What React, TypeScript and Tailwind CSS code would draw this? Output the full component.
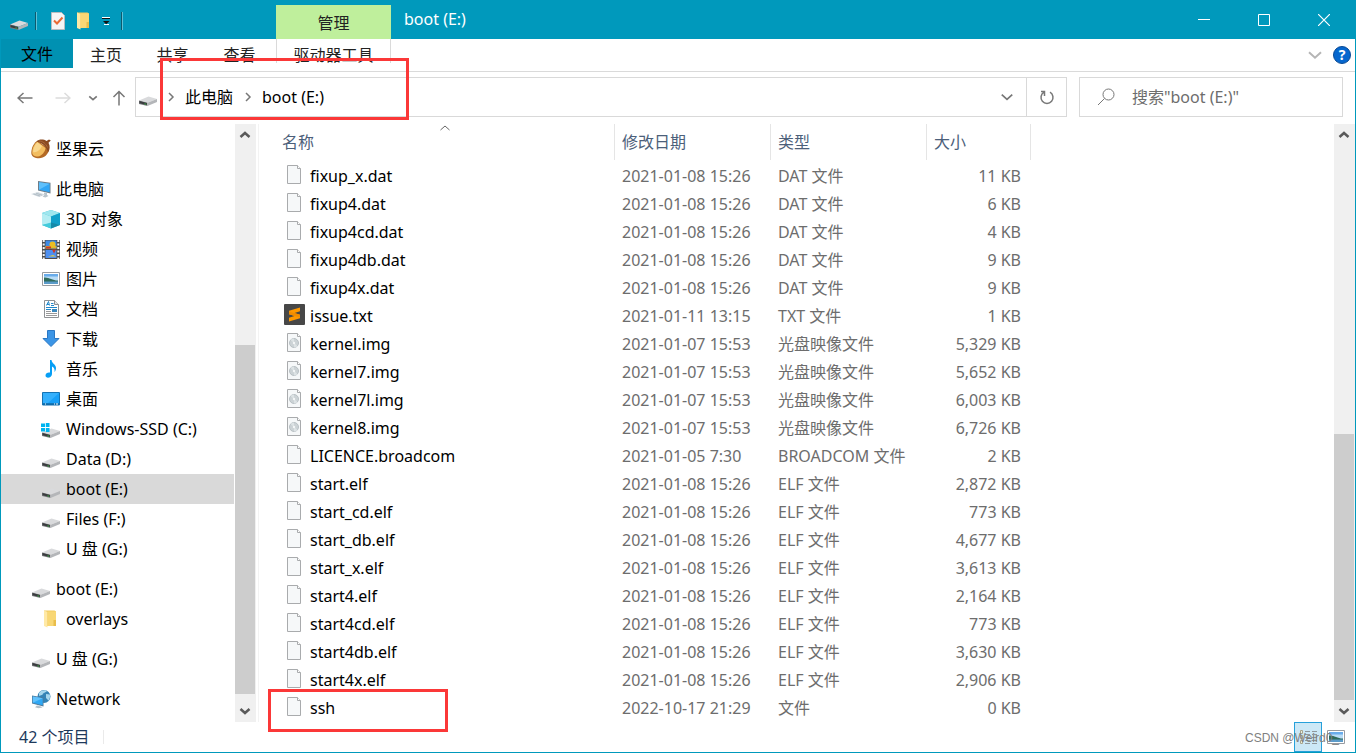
import type { ReactNode } from "react";

type FileKind = "blank" | "disc" | "sublime";

type FileRow = {
  name: string;
  date: string;
  type: string;
  size: string;
  kind?: FileKind;
};

const files: FileRow[] = [
  { name: "fixup_x.dat", date: "2021-01-08 15:26", type: "DAT 文件", size: "11 KB" },
  { name: "fixup4.dat", date: "2021-01-08 15:26", type: "DAT 文件", size: "6 KB" },
  { name: "fixup4cd.dat", date: "2021-01-08 15:26", type: "DAT 文件", size: "4 KB" },
  { name: "fixup4db.dat", date: "2021-01-08 15:26", type: "DAT 文件", size: "9 KB" },
  { name: "fixup4x.dat", date: "2021-01-08 15:26", type: "DAT 文件", size: "9 KB" },
  { name: "issue.txt", date: "2021-01-11 13:15", type: "TXT 文件", size: "1 KB", kind: "sublime" },
  { name: "kernel.img", date: "2021-01-07 15:53", type: "光盘映像文件", size: "5,329 KB", kind: "disc" },
  { name: "kernel7.img", date: "2021-01-07 15:53", type: "光盘映像文件", size: "5,652 KB", kind: "disc" },
  { name: "kernel7l.img", date: "2021-01-07 15:53", type: "光盘映像文件", size: "6,003 KB", kind: "disc" },
  { name: "kernel8.img", date: "2021-01-07 15:53", type: "光盘映像文件", size: "6,726 KB", kind: "disc" },
  { name: "LICENCE.broadcom", date: "2021-01-05 7:30", type: "BROADCOM 文件", size: "2 KB" },
  { name: "start.elf", date: "2021-01-08 15:26", type: "ELF 文件", size: "2,872 KB" },
  { name: "start_cd.elf", date: "2021-01-08 15:26", type: "ELF 文件", size: "773 KB" },
  { name: "start_db.elf", date: "2021-01-08 15:26", type: "ELF 文件", size: "4,677 KB" },
  { name: "start_x.elf", date: "2021-01-08 15:26", type: "ELF 文件", size: "3,613 KB" },
  { name: "start4.elf", date: "2021-01-08 15:26", type: "ELF 文件", size: "2,164 KB" },
  { name: "start4cd.elf", date: "2021-01-08 15:26", type: "ELF 文件", size: "773 KB" },
  { name: "start4db.elf", date: "2021-01-08 15:26", type: "ELF 文件", size: "3,630 KB" },
  { name: "start4x.elf", date: "2021-01-08 15:26", type: "ELF 文件", size: "2,906 KB" },
  { name: "ssh", date: "2022-10-17 21:29", type: "文件", size: "0 KB" },
];

function Icon({ children }: { children: ReactNode }) {
  return (
    <svg className="h-5 w-5 shrink-0" viewBox="0 0 20 20" fill="none" aria-hidden="true">
      {children}
    </svg>
  );
}

function DriveShape() {
  return (
    <>
      <path d="M1 13.500 10.500 9.600 19 12 9.500 15.700Z" fill="#d9dadc" />
      <path d="M1 13.500 9.500 15.700V19L1 17Z" fill="#77797c" />
      <path d="M9.500 15.700 19 12V15L9.500 19Z" fill="#b4b6b9" />
      <path d="M1.500 14.100 9 16V18L1.500 16.300Z" fill="#3a3c3f" />
      <path d="M6.500 16.300 8.200 16.700V17.700L6.500 17.300Z" fill="#35a93f" />
    </>
  );
}

function DriveIcon() {
  return (
    <Icon>
      <DriveShape />
    </Icon>
  );
}

function SystemDriveIcon() {
  return (
    <Icon>
      <DriveShape />
      <path d="M0 4.500h4v3.500H0zM4.800 4h3.700v4H4.800zM0 9h4v3.500H0zM4.800 9h3.700v4H4.800z" fill="#00b4f0" />
    </Icon>
  );
}

function AcornIcon() {
  return (
    <Icon>
      <path d="M6.500 1.800C3.200 3.500.3 8.500.3 14c0 3.500 3.500 5.300 7.700 5.300 5 0 9.500-4 10-9.300z" fill="#b46a25" />
      <path d="M6.500 2.800C3.500 4.500 1.200 9 1.200 13.500c0 2.800 2.800 4.200 5.800 4C10.500 17 14.500 12.500 14.500 9z" fill="#f2bd60" />
      <path d="M6.500 3.500C4 5.500 2 9.500 2.200 13c2.500 1 7-1.500 8.800-6z" fill="#f9d78d" />
      <path d="M5.500 2.500C8 0 12.500 0 15.500 2L18 .4l1.800 1.200-2.300 2.200c1.800 3.200 1.500 7-.5 9.700-.8-5-5-9.500-11.500-11z" fill="#8a4a20" />
      <path d="M8 2c3.500 0 7 2.500 8.500 6.500" stroke="#a9693a" />
    </Icon>
  );
}

function ComputerIcon() {
  return (
    <Icon>
      <path d="M7 2 19.500 3.800V14.500L7 11.500Z" fill="#6d7c88" />
      <path d="M8 3.200 18.700 4.800V13.200L8 10.700Z" fill="#31a6f5" />
      <path d="M8 3.200 18.700 4.800 8 10.700Z" fill="#5fc0fb" />
      <path d="M13 13.500l3 .6v1.800l1.500 1-3 1.600-3-.8 1.500-1Z" fill="#b9c4cc" />
      <path d="M0 15 7 13 14.500 15.800 8 18Z" fill="#d4dce2" />
      <path d="M2.500 15 9 17M5 14.200l6 2" stroke="#b4bfc7" />
    </Icon>
  );
}

function CubeIcon() {
  return (
    <Icon>
      <path d="M1 4 10 1l9 3v12l-9 3.500L1 16z" fill="#31bfd2" />
      <path d="M1 4 10 1l9 3-9 3.500Z" fill="#9fe6ee" />
      <path d="M1 4l9 3.500v7L1 16z" fill="#b4edf3" />
      <path d="M10 7.500 19 4v12l-9-1.500z" fill="#109fc9" />
      <path d="M1 16l9-2.500v6z" fill="#44cbdb" />
      <path d="M10 13.500 19 16l-9 3.500z" fill="#1489a8" />
    </Icon>
  );
}

function VideoIcon() {
  return (
    <Icon>
      <path d="M1 1h18v19H1z" fill="#4c4c4c" />
      <path d="M4.500 1.500h11v8h-11z" fill="#3f8be4" />
      <path d="M4.500 11h11v8h-11z" fill="#4d8ff0" />
      <path d="M4.500 7h11v2.500h-11z" fill="#dfb42b" />
      <circle cx="11.500" cy="5.500" r="3" fill="#ebbd22" />
      <path d="M5 7.500h5v2H5zM11 10.500h4l-2 4z" fill="#cc3827" />
      <path d="M7 17.500h8l-3-1.500z" fill="#e4cb41" />
      <path d="M2.700 1v19M17.300 1v19" stroke="#f4f4f4" strokeWidth="2" strokeDasharray="2 1.500" />
    </Icon>
  );
}

function PictureIcon() {
  return (
    <Icon>
      <path d="M1.500 3.500h17v13h-17z" fill="#fff" stroke="#989ba0" />
      <path d="M3 5h14v10H3z" fill="#b9dcf6" />
      <path d="M3 5h14v2.500H3z" fill="#69aceb" />
      <path d="M3 8.500c5-.5 8 3 14 3V13H3z" fill="#2f6b5b" />
      <path d="M3 12.500h14V15H3z" fill="#5b9bc9" />
    </Icon>
  );
}

function DocumentIcon() {
  return (
    <Icon>
      <path d="M3.500 1.500h10l4 4v13h-14z" fill="#fff" stroke="#8e9194" />
      <path d="M13.500 1.500v4h4" fill="#e4e6e8" stroke="#8e9194" />
      <path d="m5.500 6.500 2-4 1 4M5.800 5.500H8M10 4.500h2.500M10 6.500h3M5 8.500h11M5 10.500h5" stroke="#2188cb" />
      <path d="M11 10h5v3h-5z" fill="#3887bd" />
      <path d="M5 12.500h5M5 14.500h11M5 16.500h11" stroke="#999" />
    </Icon>
  );
}

function DownloadIcon() {
  return (
    <Icon>
      <path d="M6.500 1.500h7v8h4.500L10 17.500 2 9.500h4.500z" fill="#3b95e6" stroke="#2a77c4" />
    </Icon>
  );
}

function MusicIcon() {
  return (
    <Icon>
      <path d="M9 1h1.500c.4 3.500 4.500 4.500 4.500 8 0 1.800-.6 3-1.500 4 .6-3-.7-4.800-2.500-5.500v7.500c0 4-6.500 5-6.500 1.500 0-2.500 2.500-3.500 4.500-3Z" fill="#079ff5" />
    </Icon>
  );
}

function DesktopIcon() {
  return (
    <Icon>
      <path d="M1.500 3.500h17v12.500h-17z" fill="#18a0f8" stroke="#1473b4" />
      <path d="M2 4h16L7 14H2z" fill="#35b0fc" />
      <path d="M2 15h16" stroke="#0a4e7c" />
      <path d="M4 15h1M13 15h1M15 15h2" stroke="#fff" />
    </Icon>
  );
}

function FolderIcon() {
  return (
    <Icon>
      <path d="M3 1.500h10.500l1.500 1V17H3z" fill="#f1cb60" />
      <path d="M3 1.500 6.500 3v15.500L3 17z" fill="#ffe9a6" />
      <path d="M6.500 2.500H15V17H6.500z" fill="#f8d775" />
      <path d="M12.500 11H15v6h-2.500z" fill="#e9bd4a" />
    </Icon>
  );
}

function NetworkIcon() {
  return (
    <Icon>
      <circle cx="13" cy="7.500" r="6.500" fill="#3483b5" />
      <path d="M8 4c2-3 6-3 8-2.200-1 2.200-4 1.500-4.500 4L8 7zM15 5l4 .5c.4 2-.2 4.500-1.500 6L15 9z" fill="#a7d7ed" />
      <path d="M1 6.500 12.500 8.500v9L1 14.500z" fill="#4f7b9c" />
      <path d="M1.800 7.500 11.700 9.300v7L1.800 13.800z" fill="#2fa8f5" />
      <path d="M1.800 7.500 11.700 9.300 1.800 13.800z" fill="#62c2fc" />
      <path d="m6 16.500 4 1 1.500 1-4 .8-3.500-1z" fill="#b4c0c8" />
    </Icon>
  );
}

function ChecklistIcon() {
  return (
    <Icon>
      <path d="M3.500 1.500h10l3 3v14h-13z" fill="#f5f5f5" stroke="#b8bcc0" />
      <path d="m6 9.500 3 3 5.500-6" stroke="#ea6a34" strokeWidth="2" />
    </Icon>
  );
}

function FileIcon({ kind = "blank" }: { kind?: FileKind }) {
  if (kind === "sublime") {
    return (
      <svg className="h-[21px] w-[21px]" viewBox="0 0 21 21" aria-hidden="true">
        <rect width="21" height="21" rx="1" fill="#474747" />
        <path d="M16 3.500v3.700l-5.500 1.700L16 10.800v3.500L5 17.500v-3.700l5.500-1.700L5 10.200V6.700Z" fill="#ff9800" />
        <path d="M5 7.500 16 10.800v2.700L5 10.200Z" fill="#f28c00" />
      </svg>
    );
  }
  return (
    <svg className="h-[21px] w-[21px]" viewBox="0 0 21 21" fill="none" aria-hidden="true">
      <path d="M3.500 1.500h10l3 3v15h-13z" fill="#f6f8f9" stroke="#a9abad" />
      <path d="M13.500 1.500v3h3" fill="#fff" stroke="#a9abad" />
      {kind === "disc" && (
        <>
          <circle cx="10" cy="11" r="4.500" fill="#ccd3d6" stroke="#b9c1c5" />
          <path d="m10 11-3.500-3A4.500 4.500 0 0 1 10 6.500zM10 11l3.500 3a4.500 4.500 0 0 1-3.500 1.500z" fill="#dde3e5" />
          <circle cx="10" cy="11" r="1.200" fill="#f4f6f7" />
        </>
      )}
    </svg>
  );
}

type Direction = "up" | "down" | "right";

const chevrons: Record<Direction, string> = {
  up: "m1.500 8 4.500-4 4.500 4",
  down: "m1.500 4 4.500 4 4.500-4",
  right: "m4 2 4 4-4 4",
};

function Chevron({ to, className }: { to: Direction; className: string }) {
  return (
    <svg className={className} viewBox="0 0 12 12" fill="none" stroke="currentColor" aria-hidden="true">
      <path d={chevrons[to]} />
    </svg>
  );
}

function ScrollBar({ thumb, className }: { thumb: ReactNode; className: string }) {
  return (
    <div className={`flex shrink-0 flex-col bg-[#f0f0f0] text-[#5a5a5a] ${className}`}>
      <button type="button" aria-label="向上滚动" className="flex h-[22px] items-center justify-center pr-px">
        <Chevron to="up" className="h-3 w-3 stroke-[2.500]" />
      </button>
      <div className="flex min-h-0 flex-1 flex-col justify-end">{thumb}</div>
      <button type="button" aria-label="向下滚动" className="flex h-[22px] items-center justify-center pr-px">
        <Chevron to="down" className="h-3 w-3 stroke-[2.500]" />
      </button>
    </div>
  );
}

type Place = { label: string; icon: ReactNode; active?: boolean };

const places: Place[][] = [
  [{ label: "坚果云", icon: <AcornIcon /> }],
  [
    { label: "此电脑", icon: <ComputerIcon /> },
    { label: "3D 对象", icon: <CubeIcon /> },
    { label: "视频", icon: <VideoIcon /> },
    { label: "图片", icon: <PictureIcon /> },
    { label: "文档", icon: <DocumentIcon /> },
    { label: "下载", icon: <DownloadIcon /> },
    { label: "音乐", icon: <MusicIcon /> },
    { label: "桌面", icon: <DesktopIcon /> },
    { label: "Windows-SSD (C:)", icon: <SystemDriveIcon /> },
    { label: "Data (D:)", icon: <DriveIcon /> },
    { label: "boot (E:)", icon: <DriveIcon />, active: true },
    { label: "Files (F:)", icon: <DriveIcon /> },
    { label: "U 盘 (G:)", icon: <DriveIcon /> },
  ],
  [
    { label: "boot (E:)", icon: <DriveIcon /> },
    { label: "overlays", icon: <FolderIcon /> },
  ],
  [{ label: "U 盘 (G:)", icon: <DriveIcon /> }],
  [{ label: "Network", icon: <NetworkIcon /> }],
];

function TitleBar() {
  return (
    <header className="flex h-[39px] shrink-0 items-stretch bg-[#0099bc] pr-px">
      <div className="flex w-[275px] items-center pt-0.5 pl-2">
        <DriveIcon />
        <span className="mr-[11px] ml-1.5 h-[18px] w-0.5 border-r border-[#5fc0d5] bg-[#0b5a6e]" />
        <button type="button" aria-label="属性">
          <ChecklistIcon />
        </button>
        <button type="button" aria-label="新建文件夹" className="ml-1.5">
          <FolderIcon />
        </button>
        <button type="button" aria-label="自定义快速访问工具栏" className="ml-1.5">
          <svg className="h-3 w-3" viewBox="0 0 12 12" aria-hidden="true">
            <path d="M2 2.500h8M4 9.500h5" stroke="#fff" />
            <path d="M2 3.500h8" stroke="#111" />
            <path d="M3 6h6.500L6.200 9.200z" fill="#111" />
          </svg>
        </button>
        <span className="ml-[9px] h-[18px] w-0.5 border-r border-[#5fc0d5] bg-[#0b5a6e]" />
      </div>
      <div className="mt-[5px] flex w-[115px] items-center justify-center bg-[#bfef9c] pt-0.5 text-[#222]">管理</div>
      <h1 className="ml-[13px] leading-[39px] text-white">boot (E:)</h1>
      <div className="ml-auto flex text-white">
        <button type="button" aria-label="最小化" className="flex w-[60px] items-center justify-center">
          <svg className="h-3 w-3" viewBox="0 0 12 12" stroke="currentColor" aria-hidden="true">
            <path d="M0 5.500h12" />
          </svg>
        </button>
        <button type="button" aria-label="最大化" className="flex w-[60px] items-center justify-center">
          <svg className="h-3 w-3" viewBox="0 0 12 12" fill="none" stroke="currentColor" aria-hidden="true">
            <path d="M.5.5h11v11H.5z" />
          </svg>
        </button>
        <button type="button" aria-label="关闭" className="flex w-[60px] items-center justify-center">
          <svg className="h-3 w-3" viewBox="0 0 12 12" fill="none" stroke="currentColor" strokeWidth="1.200" aria-hidden="true">
            <path d="m0 0 12 12M12 0 0 12" />
          </svg>
        </button>
      </div>
    </header>
  );
}

function Ribbon() {
  return (
    <nav className="flex h-[33px] shrink-0 border-b border-[#dadada]">
      <button type="button" className="h-[29px] w-[72px] bg-[#0091b2]">
        文件
      </button>
      <div className="flex h-6 leading-8 text-[#222]">
        <button type="button" className="flex w-[66px] justify-center">主页</button>
        <button type="button" className="flex w-[67px] justify-center">共享</button>
        <button type="button" className="flex w-[67px] justify-center">查看</button>
        <button type="button" className="ml-[3px] flex w-[115px] justify-center border-x border-[#dadada]">
          驱动器工具
        </button>
      </div>
      <div className="ml-auto flex items-center gap-2.5 pr-1">
        <button type="button" aria-label="展开功能区" className="text-[#b5b5b5]">
          <Chevron to="down" className="h-4 w-4 stroke-[1.5]" />
        </button>
        <button
          type="button"
          aria-label="帮助"
          className="flex h-[18px] w-[18px] items-center justify-center rounded-full border border-[#0a4a94] bg-[#0667ce] text-sm font-bold text-white"
        >
          ?
        </button>
      </div>
    </nav>
  );
}

function AddressBar() {
  return (
    <div className="relative flex h-[52px] shrink-0 pt-[5px] pr-3">
      <div className="flex h-10 w-[134px] items-center pt-0.5 pl-4 text-[#777]">
        <button type="button" aria-label="后退">
          <svg className="h-4 w-4" viewBox="0 0 16 16" fill="none" stroke="currentColor" strokeWidth="1.500" aria-hidden="true">
            <path d="M15.500 8H1M6.500 3 1 8l5.500 5" />
          </svg>
        </button>
        <button type="button" aria-label="前进" className="ml-[22px] text-[#dcdcdc]">
          <svg className="h-4 w-4" viewBox="0 0 16 16" fill="none" stroke="currentColor" strokeWidth="1.500" aria-hidden="true">
            <path d="M.5 8H15M9.500 3 15 8l-5.500 5" />
          </svg>
        </button>
        <button type="button" aria-label="最近浏览的位置" className="ml-[17px]">
          <Chevron to="down" className="h-2.5 w-2.5 stroke-2" />
        </button>
        <button type="button" aria-label="向上" className="ml-[13px]">
          <svg className="h-4 w-4" viewBox="0 0 16 16" fill="none" stroke="currentColor" strokeWidth="1.500" aria-hidden="true">
            <path d="M8 15.500V1.500M2.500 7 8 1.500 13.500 7" />
          </svg>
        </button>
      </div>
      <div className="flex h-10 min-w-0 flex-1 items-center border border-[#d9d9d9] pl-0.5">
        <DriveIcon />
        <Chevron to="right" className="ml-[7px] h-3 w-3 stroke-[1.500] text-[#777]" />
        <a href="#this-pc" className="ml-2">此电脑</a>
        <Chevron to="right" className="ml-[9px] h-3 w-3 stroke-[1.500] text-[#777]" />
        <a href="#boot" className="ml-2">boot (E:)</a>
        <button type="button" aria-label="以前的位置" className="ml-auto flex w-[38px] justify-center text-[#777]">
          <Chevron to="down" className="h-3.5 w-3.5 stroke-[1.500]" />
        </button>
        <button
          type="button"
          aria-label="刷新"
          className="flex h-full w-10 items-center justify-center border-l border-[#d9d9d9] text-[#777]"
        >
          <svg className="h-4 w-4" viewBox="0 0 16 16" fill="none" stroke="currentColor" strokeWidth="1.500" aria-hidden="true">
            <path d="M11 3.200A6 6 0 1 1 5 3.200M5.500 7V2.500H2" />
          </svg>
        </button>
      </div>
      <label className="ml-3 flex h-10 w-[264px] items-center border border-[#d9d9d9] pl-[17px]">
        <svg className="h-[18px] w-[18px] shrink-0 text-[#777]" viewBox="0 0 18 18" fill="none" stroke="currentColor" aria-hidden="true">
          <circle cx="11.500" cy="6.500" r="5.500" />
          <path d="M7.500 10.500 1 17" />
        </svg>
        <input
          type="text"
          aria-label="搜索"
          placeholder={'搜索"boot (E:)"'}
          className="ml-[17px] min-w-0 flex-1 outline-none placeholder:text-[#6d6d6d]"
        />
      </label>
      <div className="pointer-events-none absolute -top-3.5 left-[159px] h-[62px] w-[249px] border-3 border-[#fb3838]" />
    </div>
  );
}

function Sidebar() {
  return (
    <aside className="flex w-[258px] shrink-0 border-r border-[#f3f3f3] pr-0.5">
      <div className="flex min-w-0 flex-1 flex-col gap-2.5 overflow-hidden pt-2.5 pr-px">
        {places.map((group, g) => (
          <ul key={g}>
            {group.map((place, i) => (
              <li key={place.label} className={place.active ? "bg-[#d9d9d9]" : ""}>
                <a
                  href="#place"
                  className={`flex h-[30px] items-center gap-[5px] ${i === 0 ? "pl-[30px]" : "pl-10"}`}
                >
                  {place.icon}
                  {place.label}
                </a>
              </li>
            ))}
          </ul>
        ))}
      </div>
      <ScrollBar className="w-[21px]" thumb={<div className="mr-px mb-1.5 h-[63%] bg-[#cdcdcd]" />} />
    </aside>
  );
}

function FileTable() {
  return (
    <table className="ml-[17px] w-[755px] table-fixed border-collapse self-start text-left text-[#6d6d6d]">
      <colgroup>
        <col className="w-[339px]" />
        <col className="w-[156px]" />
        <col className="w-[156px]" />
        <col className="w-[104px]" />
      </colgroup>
      <thead className="text-[#4c607a]">
        <tr className="h-[38px]">
          <th className="relative p-0 align-top font-normal">
            <div className="h-9 border-r border-[#e5e5e5] pl-1.5 leading-9">名称</div>
            <Chevron to="up" className="absolute -top-0.5 left-[163px] h-3 w-3 text-[#666]" />
          </th>
          {["修改日期", "类型", "大小"].map((title) => (
            <th key={title} className="p-0 align-top font-normal">
              <div className="h-9 border-r border-[#e5e5e5] pl-[7px] leading-9">{title}</div>
            </th>
          ))}
        </tr>
      </thead>
      <tbody>
        {files.map((file) => (
          <tr key={file.name} className="h-7 whitespace-nowrap">
            <td className="relative p-0">
              <div className="flex h-7 items-center gap-[5px] pl-2 text-black">
                <div className="pb-1">
                  <FileIcon kind={file.kind} />
                </div>
                {file.name}
              </div>
              {file.name === "ssh" && (
                <div className="pointer-events-none absolute -top-[5px] -left-2 h-[43px] w-[180px] border-3 border-[#fb3838]" />
              )}
            </td>
            <td className="p-0 pl-[7px]">{file.date}</td>
            <td className="p-0 pl-[7px]">{file.type}</td>
            <td className="p-0 pr-[10px] text-right">{file.size}</td>
          </tr>
        ))}
      </tbody>
    </table>
  );
}

function StatusBar() {
  return (
    <footer className="relative flex h-[30px] shrink-0 items-center pl-[18px] text-[#1e395b]">
      <span>42 个项目</span>
      <span className="ml-3.5 h-3.5 w-px bg-[#eaeaea]" />
      <div className="ml-auto flex h-full items-center pr-[9px]">
        <button
          type="button"
          aria-label="详细信息"
          className="flex h-full w-7 items-center justify-center border border-[#26a0da] bg-[#cce8f6]"
        >
          <svg className="h-5 w-5" viewBox="0 0 20 20" fill="none" aria-hidden="true">
            <path d="M2.500 3.500h2v3h-2zM2.500 8.500h2v3h-2zM2.500 13.500h2v3h-2z" fill="#e9eee2" stroke="#a8a58c" />
            <path d="M7 4.500h5M14 4.500h5M7 7.500h5M14 7.500h5M7 10.500h5M14 10.500h5M7 13.500h5M14 13.500h5M7 16.500h5M14 16.500h5" stroke="#8f989d" />
          </svg>
        </button>
        <button type="button" aria-label="大缩略图" className="ml-1">
          <PictureIcon />
        </button>
      </div>
      <span className="absolute right-4 bottom-1.5 font-['Liberation_Sans',sans-serif] text-xs leading-4 text-[#808080]">
        CSDN @Weird0_
      </span>
    </footer>
  );
}

export default function App() {
  return (
    <div className="flex h-screen flex-col overflow-hidden border-x border-b border-[#0099bc] bg-white font-['Noto_Sans','Noto_Sans_CJK_SC',sans-serif] text-base leading-6 text-black">
      <TitleBar />
      <Ribbon />
      <AddressBar />
      <main className="flex min-h-0 flex-1">
        <Sidebar />
        <FileTable />
        <ScrollBar className="ml-auto w-[21px]" thumb={<div className="mr-px h-[48%] bg-[#cdcdcd]" />} />
      </main>
      <StatusBar />
    </div>
  );
}
